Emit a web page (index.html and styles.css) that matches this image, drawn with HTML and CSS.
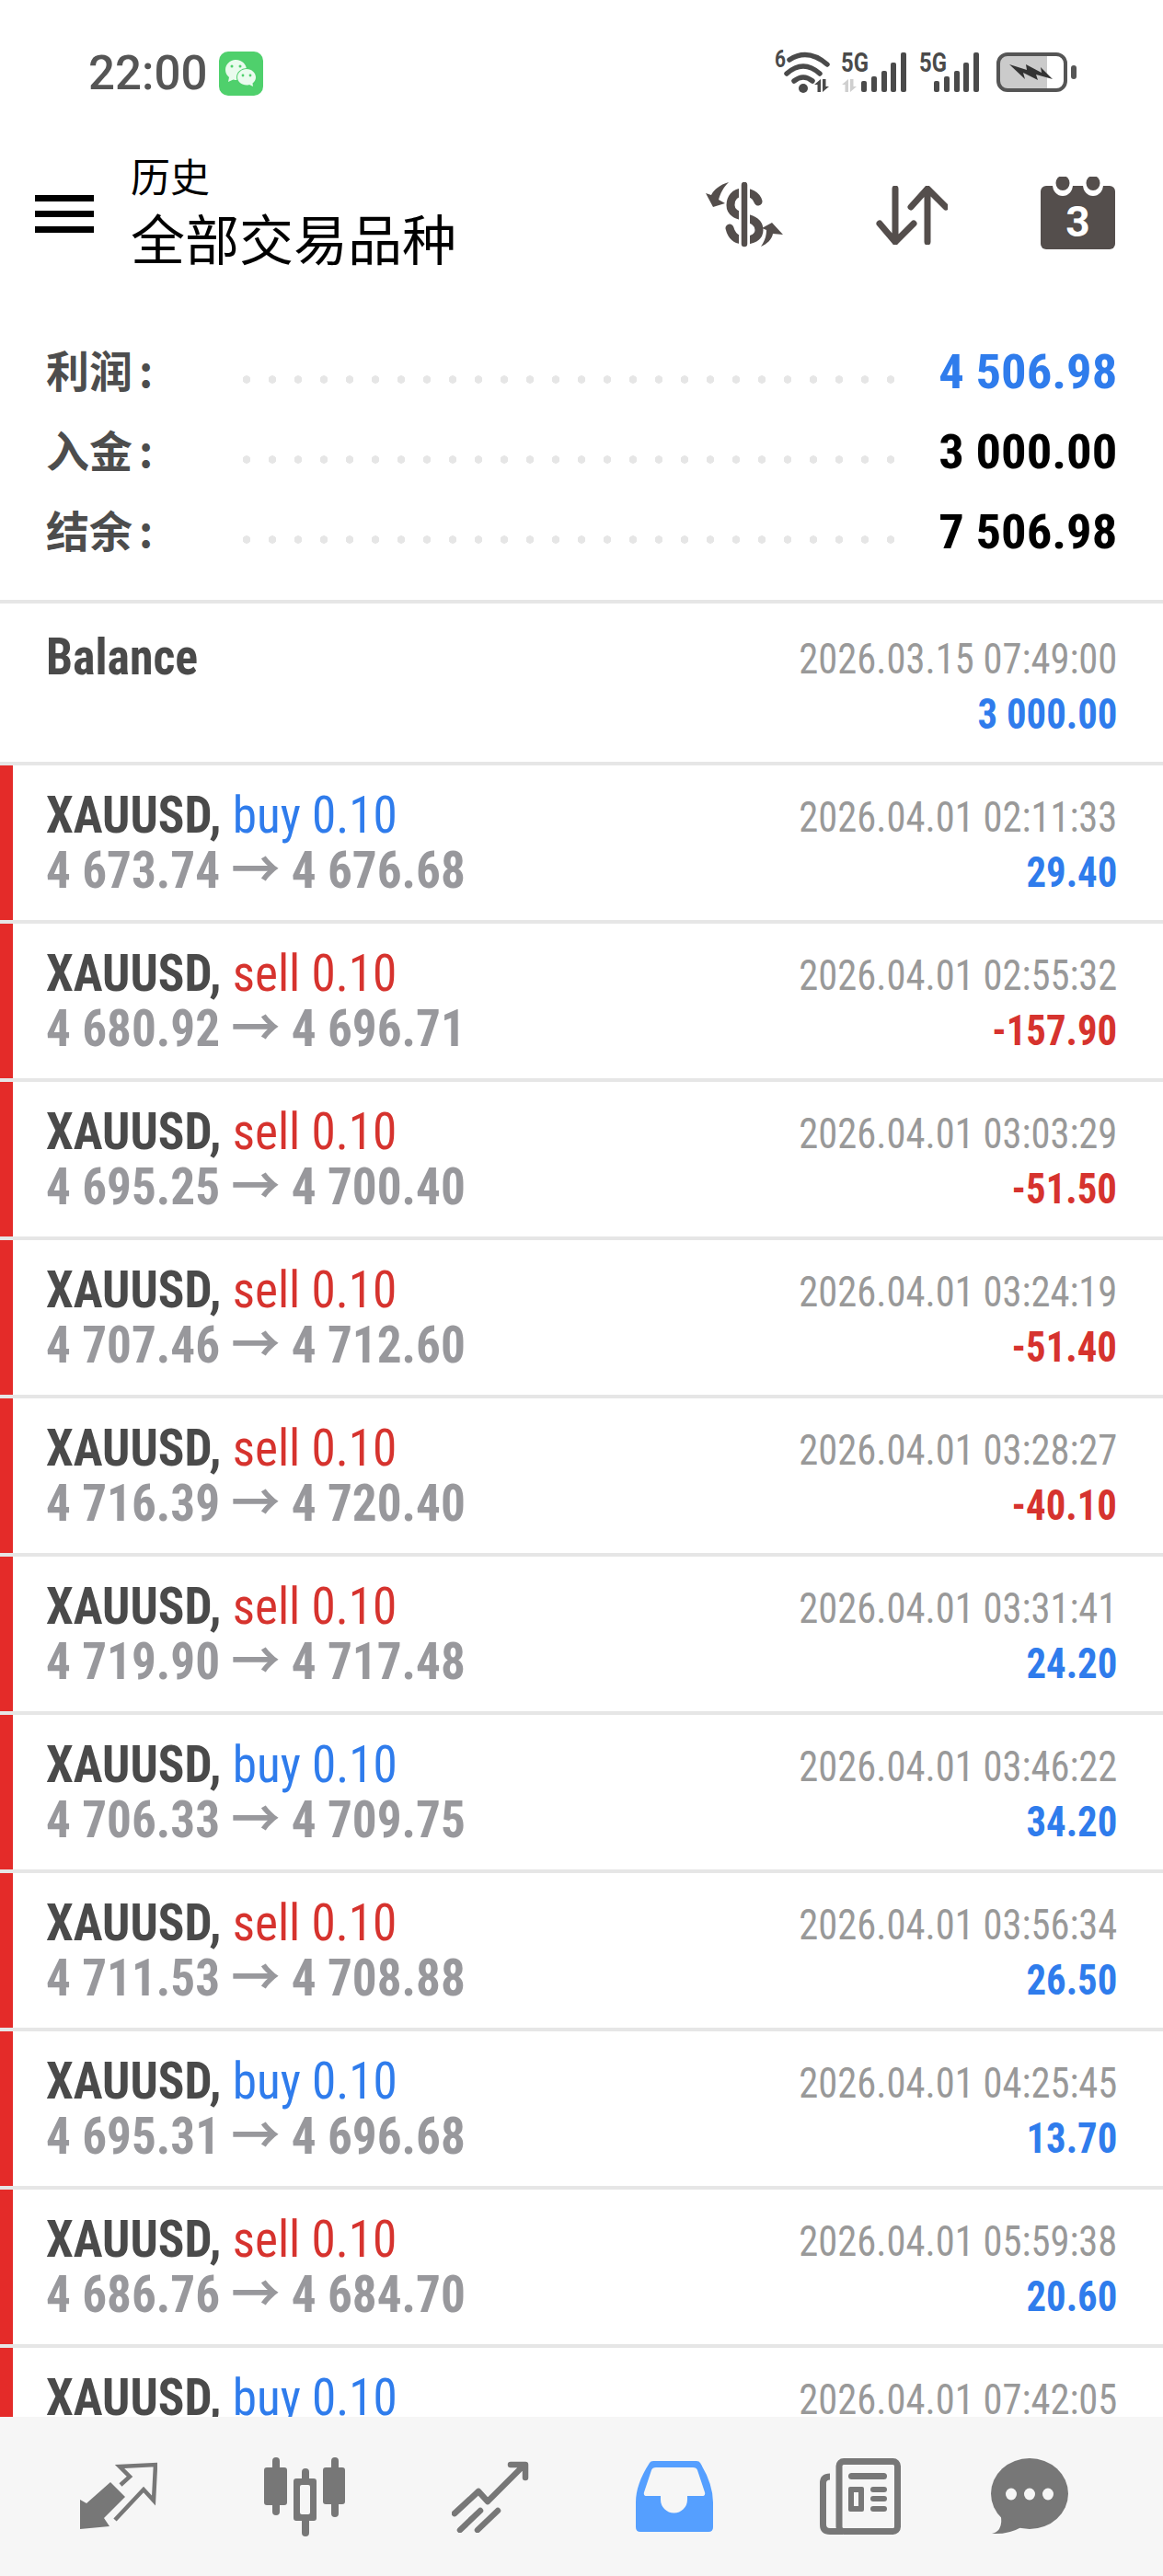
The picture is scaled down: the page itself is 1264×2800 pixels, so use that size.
FILE: index.html
```html
<!DOCTYPE html>
<html lang="en">
<head>
    <meta charset="UTF-8">
    <title>历史</title>
    <link rel="stylesheet" href="styles.css">
</head>
<body>
<div class="phone">
    <div class="status">
        <span class="clock">22:00</span>
        <svg class="wechat" width="48" height="48" viewBox="0 0 48 48">
            <rect width="48" height="48" rx="10" fill="#4fd06c"/>
            <path d="M7 20c0-6 5-11 11.500-11S30 14 30 20s-5 11-11.500 11c-1 0-2 0-3-.4L10 33l1-5c-2.500-2-4-5-4-8z" fill="#eafbee"/>
            <ellipse cx="30" cy="28" rx="11" ry="10" fill="#4fd06c"/>
            <path d="M20 28c0-5 4.500-9 10-9s10 4 10 9c0 3-1.500 5-3.500 6.500L37 38l-4-2c-1 .4-2 .5-3 .5-5.500 0-10-4-10-8.500z" fill="#eafbee"/>
            <circle cx="14" cy="16" r="1.500" fill="#4fd06c"/><circle cx="23" cy="16" r="1.500" fill="#4fd06c"/>
            <circle cx="26" cy="26" r="1.400" fill="#4fd06c"/><circle cx="34" cy="26" r="1.400" fill="#4fd06c"/>
        </svg>
        <svg class="signals" width="328" height="56" viewBox="0 -10 328 56">
            <g fill="#4a4a4a" font-family="Roboto, sans-serif" font-weight="700">
                <text x="0" y="18" font-size="26" textLength="12" lengthAdjust="spacingAndGlyphs">6</text>
                <text x="72" y="23" font-size="30" textLength="30" lengthAdjust="spacingAndGlyphs">5G</text>
                <text x="157" y="23" font-size="30" textLength="30" lengthAdjust="spacingAndGlyphs">5G</text>
            </g>
            <g fill="none" stroke="#4a4a4a" stroke-width="5.500" stroke-linecap="round">
                <path d="M16 10Q36-3 57 15"/>
                <path d="M13 25Q31 9 49 25"/>
                <path d="M21 33Q31 25 41 33"/>
            </g>
            <circle cx="31" cy="41" r="5" fill="#4a4a4a"/>
            <path d="M50 31v14h-3.500v-8H43zM52 45V31h3.500v8H59z" fill="#4a4a4a"/>
            <path d="M80 31v14h-3.500v-8H73zM82 45V31h3.500v8H89z" fill="#cfcfcf"/>
            <g fill="#4a4a4a">
                <rect x="94" y="33" width="6" height="12" rx="2"/><rect x="105" y="28" width="6" height="17" rx="2"/>
                <rect x="116" y="22" width="6" height="23" rx="2"/><rect x="126" y="13" width="6" height="32" rx="2"/>
                <rect x="137" y="2" width="6" height="43" rx="2"/>
                <rect x="173" y="33" width="6" height="12" rx="2"/><rect x="184" y="28" width="6" height="17" rx="2"/>
                <rect x="195" y="22" width="6" height="23" rx="2"/><rect x="205" y="13" width="6" height="32" rx="2"/>
                <rect x="216" y="2" width="6" height="43" rx="2"/>
            </g>
            <path d="M252 4h44v39h-44a9 9 0 0 1-9-9V13a9 9 0 0 1 9-9z" fill="#cbcbcb"/>
            <rect x="243" y="4" width="73" height="39" rx="10" fill="none" stroke="#555" stroke-width="4"/>
            <path d="M255 15l19 6-1-6 17 9-1-6 13 13-18-5 2 6-16-8 2 7z" fill="#333"/>
            <rect x="322" y="16" width="6" height="15" rx="3" fill="#555"/>
        </svg>
    </div>

    <div class="topbar">
        <div class="burger"><span></span><span></span><span></span></div>
        <div class="title">
            <div class="title-small">历史</div>
            <div class="title-big">全部交易品种</div>
        </div>
        <svg class="icon-dollar" width="86" height="72" viewBox="0 0 86 72">
            <path d="M57 21C55 14 48 11 41 11 31 11 27 18 27 25c0 9 9 11 15 13 10 3 16 6 16 14 0 8-8 11-16 11-9 0-14-5-16-13" fill="none" stroke="#544e4c" stroke-width="9" stroke-linecap="round"/>
            <path d="M42 0v70" stroke="#fff" stroke-width="12"/>
            <path d="M42 3v64" stroke="#544e4c" stroke-width="6.500" stroke-linecap="round"/>
            <path d="M25 0C15 3 9 8 6 14L0 12l8 15 13-4-7-4c2-7 5-13 11-19zM60 70c7-3 12-8 13-14l11 1-12-13-11 6 5 2c0 7-2 12-6 18z" fill="#544e4c"/>
        </svg>
        <svg class="icon-sort" width="78" height="64" viewBox="0 0 78 64">
            <path d="M21 3v58M4 41l17 20 20-20M56 61V4M38 23L56 3l20 20" fill="none" stroke="#544e4c" stroke-width="7" stroke-linecap="round" stroke-linejoin="round"/>
        </svg>
        <svg class="icon-calendar" width="81" height="79" viewBox="0 0 81 79">
            <rect y="10" width="81" height="69" rx="6" fill="#544e4c"/>
            <ellipse cx="24" cy="9" rx="11" ry="12" fill="#fff"/><ellipse cx="57" cy="9" rx="11" ry="12" fill="#fff"/>
            <ellipse cx="24" cy="7" rx="7.500" ry="8" fill="#544e4c"/><ellipse cx="57" cy="7" rx="7.500" ry="8" fill="#544e4c"/>
            <text x="40.500" y="65" text-anchor="middle" font-family="Roboto, sans-serif" font-weight="700" font-size="46" fill="#fff">3</text>
        </svg>
    </div>

    <div class="summary">
        <div class="sum-row"><span class="sum-label">利润<span class="colon">:</span></span><span class="dots"></span><span class="sum-value blue">4 506.98</span></div>
        <div class="sum-row"><span class="sum-label">入金<span class="colon">:</span></span><span class="dots"></span><span class="sum-value">3 000.00</span></div>
        <div class="sum-row"><span class="sum-label">结余<span class="colon">:</span></span><span class="dots"></span><span class="sum-value">7 506.98</span></div>
    </div>

    <div class="list">
        <div class="row balance">
            <div class="row-main"><div class="line"><span class="narrow"><b class="sym">Balance</b></span></div></div>
            <div class="row-side">
                <div class="date"><span class="narrow-r">2026.03.15 07:49:00</span></div>
                <div class="amount blue"><span class="narrow-r">3 000.00</span></div>
            </div>
        </div>

        <div class="row trade">
            <div class="row-main">
                <div class="line"><span class="narrow"><b class="sym">XAUUSD,</b> <span class="buy">buy 0.10</span></span></div>
                <div class="line price"><span class="narrow">4 673.74 → 4 676.68</span></div>
            </div>
            <div class="row-side">
                <div class="date"><span class="narrow-r">2026.04.01 02:11:33</span></div>
                <div class="amount blue"><span class="narrow-r">29.40</span></div>
            </div>
        </div>
        <div class="row trade">
            <div class="row-main">
                <div class="line"><span class="narrow"><b class="sym">XAUUSD,</b> <span class="sell">sell 0.10</span></span></div>
                <div class="line price"><span class="narrow">4 680.92 → 4 696.71</span></div>
            </div>
            <div class="row-side">
                <div class="date"><span class="narrow-r">2026.04.01 02:55:32</span></div>
                <div class="amount red"><span class="narrow-r">-157.90</span></div>
            </div>
        </div>
        <div class="row trade">
            <div class="row-main">
                <div class="line"><span class="narrow"><b class="sym">XAUUSD,</b> <span class="sell">sell 0.10</span></span></div>
                <div class="line price"><span class="narrow">4 695.25 → 4 700.40</span></div>
            </div>
            <div class="row-side">
                <div class="date"><span class="narrow-r">2026.04.01 03:03:29</span></div>
                <div class="amount red"><span class="narrow-r">-51.50</span></div>
            </div>
        </div>
        <div class="row trade">
            <div class="row-main">
                <div class="line"><span class="narrow"><b class="sym">XAUUSD,</b> <span class="sell">sell 0.10</span></span></div>
                <div class="line price"><span class="narrow">4 707.46 → 4 712.60</span></div>
            </div>
            <div class="row-side">
                <div class="date"><span class="narrow-r">2026.04.01 03:24:19</span></div>
                <div class="amount red"><span class="narrow-r">-51.40</span></div>
            </div>
        </div>
        <div class="row trade">
            <div class="row-main">
                <div class="line"><span class="narrow"><b class="sym">XAUUSD,</b> <span class="sell">sell 0.10</span></span></div>
                <div class="line price"><span class="narrow">4 716.39 → 4 720.40</span></div>
            </div>
            <div class="row-side">
                <div class="date"><span class="narrow-r">2026.04.01 03:28:27</span></div>
                <div class="amount red"><span class="narrow-r">-40.10</span></div>
            </div>
        </div>
        <div class="row trade">
            <div class="row-main">
                <div class="line"><span class="narrow"><b class="sym">XAUUSD,</b> <span class="sell">sell 0.10</span></span></div>
                <div class="line price"><span class="narrow">4 719.90 → 4 717.48</span></div>
            </div>
            <div class="row-side">
                <div class="date"><span class="narrow-r">2026.04.01 03:31:41</span></div>
                <div class="amount blue"><span class="narrow-r">24.20</span></div>
            </div>
        </div>
        <div class="row trade">
            <div class="row-main">
                <div class="line"><span class="narrow"><b class="sym">XAUUSD,</b> <span class="buy">buy 0.10</span></span></div>
                <div class="line price"><span class="narrow">4 706.33 → 4 709.75</span></div>
            </div>
            <div class="row-side">
                <div class="date"><span class="narrow-r">2026.04.01 03:46:22</span></div>
                <div class="amount blue"><span class="narrow-r">34.20</span></div>
            </div>
        </div>
        <div class="row trade">
            <div class="row-main">
                <div class="line"><span class="narrow"><b class="sym">XAUUSD,</b> <span class="sell">sell 0.10</span></span></div>
                <div class="line price"><span class="narrow">4 711.53 → 4 708.88</span></div>
            </div>
            <div class="row-side">
                <div class="date"><span class="narrow-r">2026.04.01 03:56:34</span></div>
                <div class="amount blue"><span class="narrow-r">26.50</span></div>
            </div>
        </div>
        <div class="row trade">
            <div class="row-main">
                <div class="line"><span class="narrow"><b class="sym">XAUUSD,</b> <span class="buy">buy 0.10</span></span></div>
                <div class="line price"><span class="narrow">4 695.31 → 4 696.68</span></div>
            </div>
            <div class="row-side">
                <div class="date"><span class="narrow-r">2026.04.01 04:25:45</span></div>
                <div class="amount blue"><span class="narrow-r">13.70</span></div>
            </div>
        </div>
        <div class="row trade">
            <div class="row-main">
                <div class="line"><span class="narrow"><b class="sym">XAUUSD,</b> <span class="sell">sell 0.10</span></span></div>
                <div class="line price"><span class="narrow">4 686.76 → 4 684.70</span></div>
            </div>
            <div class="row-side">
                <div class="date"><span class="narrow-r">2026.04.01 05:59:38</span></div>
                <div class="amount blue"><span class="narrow-r">20.60</span></div>
            </div>
        </div>
        <div class="row trade">
            <div class="row-main">
                <div class="line"><span class="narrow"><b class="sym">XAUUSD,</b> <span class="buy">buy 0.10</span></span></div>
            </div>
            <div class="row-side">
                <div class="date"><span class="narrow-r">2026.04.01 07:42:05</span></div>
            </div>
        </div>
    </div>

    <div class="tabs">
        <svg class="tab tab-trade" width="84" height="75" viewBox="0 0 84 75">
            <path d="M0 73V41l7 4 26-23 16 16-23 23 6 9z" fill="#777"/>
            <path d="M44 25l10-9L43 5l39-2-2 39-11-12-31 33" fill="none" stroke="#777" stroke-width="4.500"/>
        </svg>
        <svg class="tab tab-candles" width="88" height="86" viewBox="0 0 88 86">
            <g fill="#777">
                <rect x="9" width="8" height="63" rx="4"/><rect y="11" width="25" height="41" rx="3"/>
                <rect x="41" y="12" width="8" height="74" rx="4"/><rect x="32" y="23" width="25" height="46" rx="3"/>
                <rect x="73" width="8" height="65" rx="4"/><rect x="64" y="11" width="24" height="40" rx="3"/>
            </g>
            <rect x="39" y="30" width="11" height="32" rx="2" fill="#f6f6f6"/>
        </svg>
        <svg class="tab tab-chart" width="84" height="78" viewBox="0 0 84 78">
            <path d="M3 57l26-24 10 11L78 5M64 4h16v14M31 54L9 75M50 54L28 75" fill="none" stroke="#777" stroke-width="6.500" stroke-linecap="round" stroke-linejoin="round"/>
        </svg>
        <svg class="tab tab-history" width="84" height="77" viewBox="0 0 84 77">
            <path d="M15 2q1-2 4-2h47q3 0 4 2 14 23 14 43v27q0 5-5 5H5q-5 0-5-5V45Q0 25 15 2z" fill="#559fff"/>
            <path d="M22 7h40q4 0 5 3l8 24q1 4-3 4H56v4a14.500 14.500 0 0 1-29 0v-4H12q-4 0-3-4l8-24q1-3 5-3z" fill="#f6f6f6"/>
        </svg>
        <svg class="tab tab-news" width="88" height="83" viewBox="0 0 88 83">
            <g fill="none" stroke="#777" stroke-width="7">
                <rect x="21" y="3.500" width="63.500" height="76" rx="5"/>
                <path d="M11 20q-7.500 0-7.500 7v45q0 7.500 7.500 7.500h14"/>
            </g>
            <g fill="#777">
                <rect x="31" y="16" width="42" height="7" rx="3.500"/>
                <path d="M33 31h13a2 2 0 0 1 2 2v23a2 2 0 0 1-2 2H33a2 2 0 0 1-2-2V33a2 2 0 0 1 2-2zm4 6v15h5V37z" fill-rule="evenodd"/>
                <rect x="55" y="31" width="18" height="6" rx="3"/><rect x="55" y="41" width="18" height="6" rx="3"/><rect x="55" y="52" width="18" height="6" rx="3"/>
            </g>
        </svg>
        <svg class="tab tab-chat" width="84" height="83" viewBox="0 0 84 83">
            <ellipse cx="42" cy="38.500" rx="42" ry="38.500" fill="#777"/>
            <path d="M10 60q3 10-1 17-3 4-8 5 18 1 32-7z" fill="#777"/>
            <g fill="#f6f6f6"><ellipse cx="22" cy="39" rx="6" ry="6.500"/><ellipse cx="42" cy="39" rx="6" ry="6.500"/><ellipse cx="62" cy="39" rx="6" ry="6.500"/></g>
        </svg>
    </div>
</div>
</body>
</html>
```

FILE: styles.css
```css
body {
    margin: 0;
    background-color: #ffffff;
    font-family: 'Roboto', 'Noto Sans CJK SC', sans-serif;
}

.phone {
    width: 1264px;
    height: 2800px;
    display: flex;
    flex-direction: column;
    overflow: hidden;
}

/* status bar */
.status {
    height: 165px;
    box-sizing: border-box;
    display: flex;
    align-items: flex-start;
    padding: 55px 0 0 96px;
    flex: none;
}

.clock {
    font-family: 'Roboto', sans-serif;
    font-weight: 500;
    font-size: 51px;
    line-height: 50px;
    color: #555555;
}

.wechat {
    margin: 1px 0 0 13px;
}

.signals {
    margin: -10px 94px 0 auto;
}

/* title bar */
.topbar {
    height: 195px;
    flex: none;
    display: flex;
    align-items: flex-start;
}

.burger {
    width: 64px;
    margin: 47px 0 0 38px;
    display: flex;
    flex-direction: column;
    gap: 10px;
}

.burger span {
    height: 7px;
    background-color: #000000;
}

.title {
    width: 349px;
    margin-left: 40px;
    color: #000000;
    font-family: 'Noto Sans CJK SC', sans-serif;
}

.title-small {
    font-size: 43px;
    line-height: 50px;
}

.title-big {
    font-size: 59px;
    line-height: 60px;
    margin-top: 13px;
    white-space: nowrap;
}

.icon-dollar {
    margin: 33px 0 0 276px;
}

.icon-sort {
    margin: 37px 0 0 99px;
}

.icon-calendar {
    margin: 27px 0 0 101px;
}

/* profit / deposit / balance */
.summary {
    height: 292px;
    flex: none;
    box-sizing: border-box;
    padding: 0 50px;
}

.sum-row {
    height: 87px;
    display: flex;
    align-items: flex-start;
}

.sum-label {
    width: 214px;
    flex: none;
    margin-top: 7px;
    font-family: 'Noto Sans CJK SC', sans-serif;
    font-weight: 700;
    font-size: 47px;
    line-height: 67px;
    color: #4d4d4d;
}

.colon {
    margin-left: 7px;
}

.dots {
    width: 709px;
    height: 9px;
    flex: none;
    margin-top: 48px;
    background-image: radial-gradient(circle at 4px 4.5px, #e6e6e6 4px, transparent 4.5px);
    background-size: 28px 9px;
    background-repeat: repeat-x;
}

.sum-value {
    margin: 11px 0 0 auto;
    font-weight: 700;
    font-stretch: 75%;
    font-size: 51px;
    line-height: 67px;
    color: #000000;
    white-space: nowrap;
    transform: scaleX(1.07);
    transform-origin: right center;
}

.blue {
    color: #2f7cec !important;
}

.red {
    color: #d6332e !important;
}

/* history rows */
.list {
    flex: 1;
    overflow: hidden;
}

.row {
    height: 172px;
    box-sizing: border-box;
    border-top: 4px solid #e6e6e6;
    display: flex;
    justify-content: space-between;
    padding: 24px 50px 0;
    background-color: #ffffff;
}

.row.balance {
    height: 176px;
    padding-top: 28px;
}

.row.trade {
    box-shadow: inset 14px 0 0 #e42b29;
}

.line {
    font-size: 56px;
    line-height: 60px;
    white-space: nowrap;
}

.sym {
    font-weight: 700;
    color: #4a4a4a;
}

.buy {
    font-weight: 400;
    color: #2f7cec;
}

.sell {
    font-weight: 400;
    color: #d6332e;
}

.price {
    font-weight: 700;
    color: #98989c;
}

.row-side {
    text-align: right;
    white-space: nowrap;
}

.date {
    font-size: 47px;
    line-height: 60px;
    color: #999999;
    padding-top: 2px;
}

.amount {
    font-size: 46px;
    line-height: 60px;
    font-weight: 700;
}

.narrow, .narrow-r {
    display: inline-block;
    font-stretch: 75%;
}

/* roboto stops at 75% width, the app's font is a bit narrower */
.narrow {
    transform: scaleX(0.95);
    transform-origin: left center;
}

.balance .narrow {
    transform: scaleX(0.925);
}

.narrow-r {
    transform: scaleX(0.93);
    transform-origin: right center;
}

.date .narrow-r {
    transform: scaleX(0.905);
}

/* bottom tabs */
.tabs {
    height: 173px;
    flex: none;
    background-color: #f6f6f6;
    display: flex;
    align-items: center;
    padding-left: 87px;
    gap: 116px;
}

.tab-chat {
    margin-left: -18px;
}
```
